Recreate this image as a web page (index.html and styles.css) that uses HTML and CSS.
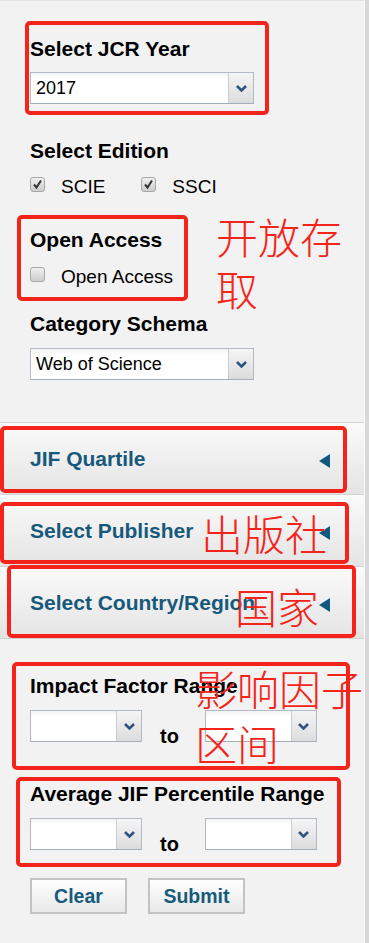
FILE: index.html
```html
<!DOCTYPE html>
<html lang="zh-CN">
<head>
    <meta charset="UTF-8">
    <meta name="viewport" content="width=device-width, initial-scale=1.0">
    <title>JCR Filters</title>
    <link rel="stylesheet" href="styles.css">
</head>
<body>
    <div class="panel">
        <div class="filters">
            <div class="label">Select JCR Year</div>
            <div class="select wide"><span class="value">2017</span><span class="arrow"><svg width="11" height="7" viewBox="0 0 11 7"><path d="M1 1 L5.5 5.5 L10 1" /></svg></span></div>

            <div class="label gap-edition">Select Edition</div>
            <div class="checkrow">
                <span class="checkbox checked"><svg width="15" height="15" viewBox="0 0 15 15"><path d="M4 7.5 L6.5 10.5 L11 3.5" /></svg></span>
                <span class="check-label">SCIE</span>
                <span class="checkbox checked"><svg width="15" height="15" viewBox="0 0 15 15"><path d="M4 7.5 L6.5 10.5 L11 3.5" /></svg></span>
                <span class="check-label">SSCI</span>
            </div>

            <div class="label gap-oa">Open Access</div>
            <div class="checkrow oa-row">
                <span class="checkbox"></span>
                <span class="check-label">Open Access</span>
            </div>

            <div class="label gap-schema">Category Schema</div>
            <div class="select wide"><span class="value">Web of Science</span><span class="arrow"><svg width="11" height="7" viewBox="0 0 11 7"><path d="M1 1 L5.5 5.5 L10 1" /></svg></span></div>
        </div>

        <div class="accordion">
            <div class="acc-item">JIF Quartile<span class="tri"></span></div>
            <div class="acc-item">Select Publisher<span class="tri"></span></div>
            <div class="acc-item">Select Country/Region<span class="tri"></span></div>
        </div>

        <div class="filters lower">
            <div class="label">Impact Factor Range</div>
            <div class="range">
                <div class="select small"><span class="value"></span><span class="arrow"><svg width="11" height="7" viewBox="0 0 11 7"><path d="M1 1 L5.5 5.5 L10 1" /></svg></span></div>
                <span class="to">to</span>
                <div class="select small"><span class="value"></span><span class="arrow"><svg width="11" height="7" viewBox="0 0 11 7"><path d="M1 1 L5.5 5.5 L10 1" /></svg></span></div>
            </div>

            <div class="label gap-avg">Average JIF Percentile Range</div>
            <div class="range">
                <div class="select small"><span class="value"></span><span class="arrow"><svg width="11" height="7" viewBox="0 0 11 7"><path d="M1 1 L5.5 5.5 L10 1" /></svg></span></div>
                <span class="to">to</span>
                <div class="select small"><span class="value"></span><span class="arrow"><svg width="11" height="7" viewBox="0 0 11 7"><path d="M1 1 L5.5 5.5 L10 1" /></svg></span></div>
            </div>

            <div class="buttons">
                <button class="btn">Clear</button>
                <button class="btn">Submit</button>
            </div>
        </div>
    </div>

    <!-- annotations drawn over the screenshot -->
    <div class="hl hl-year"></div>
    <div class="hl hl-oa"></div>
    <div class="hl hl-jif"></div>
    <div class="hl hl-pub"></div>
    <div class="hl hl-country"></div>
    <div class="hl hl-impact"></div>
    <div class="hl hl-avg"></div>

    <div class="note note-oa">开放存取</div>
    <div class="note note-pub">出版社</div>
    <div class="note note-country">国家</div>
    <div class="note note-impact">影响因子区间</div>
</body>
</html>
```

FILE: styles.css
```css
html, body {
    margin: 0;
    padding: 0;
}
body {
    position: relative;
    width: 369px;
    height: 943px;
    overflow: hidden;
    background-color: #d8d8d8;
    font-family: "Liberation Sans", Arial, sans-serif;
    color: #000;
}
.panel {
    width: 365px;
    height: 943px;
    box-sizing: border-box;
    background-color: #f2f2f2;
    border-top: 1px solid #e4e4e4;
    border-right: 1px solid #fafafa;
}
.filters {
    padding: 36px 0 42px 30px;
}
.filters.lower {
    padding-top: 35px;
}
.label {
    font-size: 21px;
    font-weight: bold;
    line-height: 24px;
    white-space: nowrap;
}
.gap-edition { margin-top: 35px; }
.gap-oa { margin-top: 30px; }
.gap-schema { margin-top: 24px; }
.gap-avg { margin-top: 40px; }

/* select boxes */
.select {
    display: flex;
    height: 32px;
    box-sizing: border-box;
    border: 1px solid #b3bac6;
    border-bottom-color: #a6adba;
    background: #fff;
    margin-top: 11px;
}
.select.wide {
    width: 224px;
}
.gap-schema + .select {
    margin-top: 12px;
}
.select.small {
    width: 112px;
    margin-top: 0;
}
.select .value {
    flex: 1;
    padding-left: 5px;
    font-size: 18px;
    line-height: 30px;
    background: linear-gradient(#f4f4f4, #fff 6px);
}
.select .arrow {
    width: 24px;
    border-left: 1px solid #c9ccd2;
    background: linear-gradient(#f5f5f5, #dcdcdc);
    display: flex;
    align-items: center;
    justify-content: center;
}
.select .arrow path {
    fill: none;
    stroke: #2f5385;
    stroke-width: 2.6;
}

/* checkboxes */
.checkrow {
    display: flex;
    align-items: flex-start;
    margin-top: 13px;
    height: 22px;
}
.checkrow.oa-row {
    margin-top: 14px;
}
.checkbox {
    width: 15px;
    height: 15px;
    box-sizing: border-box;
    margin-top: 1px;
    border: 1px solid #a7a7a7;
    border-radius: 3px;
    background: linear-gradient(#f0f0f0, #cdcdcd);
    display: flex;
}
.checkbox svg {
    margin: -1px;
}
.checkbox path {
    fill: none;
    stroke: #333;
    stroke-width: 2;
}
.check-label {
    margin-left: 16px;
    margin-right: 36px;
    font-size: 19px;
    line-height: 22px;
}

/* accordion bars */
.accordion {
    border-top: 1px solid #d3d3d3;
}
.acc-item {
    height: 72px;
    box-sizing: border-box;
    border-bottom: 1px solid #d2d2d2;
    border-top: 1px solid #fbfbfb;
    background: linear-gradient(#fafafa, #e4e4e4);
    display: flex;
    align-items: center;
    padding-left: 30px;
    font-size: 21px;
    font-weight: bold;
    color: #17597b;
}
.tri {
    margin-left: auto;
    margin-right: 34px;
    margin-top: 4px;
    width: 0;
    height: 0;
    border-top: 7.5px solid transparent;
    border-bottom: 7.5px solid transparent;
    border-right: 11px solid #0f5a80;
}

/* range rows */
.range {
    display: flex;
    align-items: flex-start;
    height: 32px;
    margin-top: 12px;
}
.to {
    margin: 16px 26px 0 18px;
    font-size: 20px;
    font-weight: bold;
    line-height: 20px;
}

.buttons {
    display: flex;
    gap: 21px;
    margin-top: 28px;
}
.btn {
    width: 97px;
    height: 36px;
    box-sizing: border-box;
    border: 2px solid #c3c3c3;
    background: linear-gradient(#ffffff, #e8e8e8);
    font-family: "Liberation Sans", Arial, sans-serif;
    font-size: 19.5px;
    font-weight: bold;
    color: #175b7c;
    padding: 0;
}

/* red annotation boxes */
.hl {
    position: absolute;
    box-sizing: border-box;
    border: 4px solid #f4241a;
    border-radius: 5px;
}
.hl-year { left: 25px; top: 21px; width: 244px; height: 94px; }
.hl-oa { left: 17px; top: 215px; width: 171px; height: 86px; }
.hl-jif { left: 0; top: 426px; width: 347px; height: 67px; }
.hl-pub { left: 0; top: 502px; width: 349px; height: 62px; }
.hl-country { left: 7px; top: 565px; width: 349px; height: 73px; }
.hl-impact { left: 12px; top: 662px; width: 338px; height: 108px; }
.hl-avg { left: 16px; top: 777px; width: 325px; height: 90px; }

.note {
    position: absolute;
    font-family: "Noto Sans CJK SC", sans-serif;
    font-weight: 300;
    font-size: 42px;
    line-height: 52px;
    color: #f4241a;
}
.note-oa { left: 216px; top: 210px; width: 130px; }
.note-pub { left: 201px; top: 507px; }
.note-country { left: 235px; top: 580px; }
.note-impact { left: 195px; top: 660px; width: 170px; line-height: 55px; }
```
